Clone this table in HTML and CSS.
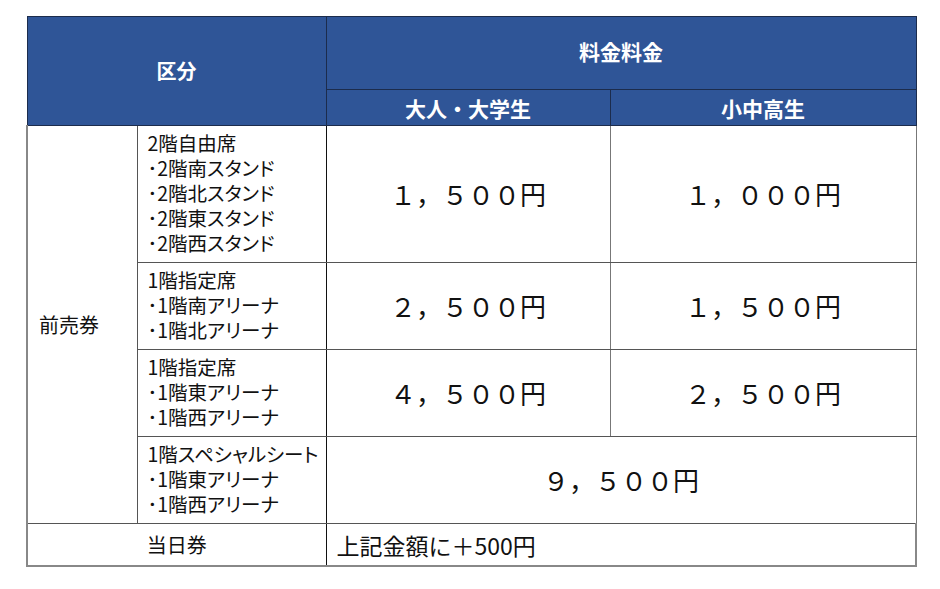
FILE: index.html
```html
<!DOCTYPE html>
<html lang="ja">
<head>
<meta charset="utf-8">
<link rel="stylesheet" href="styles.css">
</head>
<body>
<div class="page">
<table class="fees">
  <colgroup>
    <col class="c1"><col class="c2"><col class="c3"><col class="c4">
  </colgroup>
  <thead>
    <tr class="h1">
      <th colspan="2" rowspan="2">区分</th>
      <th colspan="2">料金料金</th>
    </tr>
    <tr class="h2">
      <th>大人・大学生</th>
      <th>小中高生</th>
    </tr>
  </thead>
  <tbody>
    <tr class="r1">
      <td rowspan="4" class="cat">前売券</td>
      <td class="seat">2階自由席<br>･2階南スタンド<br>･2階北スタンド<br>･2階東スタンド<br>･2階西スタンド</td>
      <td class="price">１，５００円</td>
      <td class="price">１，０００円</td>
    </tr>
    <tr class="r2">
      <td class="seat">1階指定席<br>･1階南アリーナ<br>･1階北アリーナ</td>
      <td class="price">２，５００円</td>
      <td class="price">１，５００円</td>
    </tr>
    <tr class="r3">
      <td class="seat">1階指定席<br>･1階東アリーナ<br>･1階西アリーナ</td>
      <td class="price">４，５００円</td>
      <td class="price">２，５００円</td>
    </tr>
    <tr class="r4">
      <td class="seat">1階スペシャルシート<br>･1階東アリーナ<br>･1階西アリーナ</td>
      <td class="price" colspan="2">９，５００円</td>
    </tr>
    <tr class="r5">
      <td colspan="2" class="day">当日券</td>
      <td colspan="2" class="note">上記金額に＋500円</td>
    </tr>
  </tbody>
</table>
</div>
</body>
</html>
```
FILE: styles.css
```css
html, body {
  margin: 0;
  padding: 0;
  background: #ffffff;
}
.page {
  padding: 16px 0 0 26px;
}
.fees {
  border-collapse: collapse;
  table-layout: fixed;
  width: 889px;
  font-family: "Noto Sans CJK JP", "Noto Sans", sans-serif;
  color: #111;
}
.c1 { width: 110px; }
.c2 { width: 189px; }
.c3 { width: 284px; }
.c4 { width: 306px; }

.fees th {
  background: #2f5597;
  color: #fff;
  font-weight: 700;
  font-size: 20px;
  border: 1px solid #1c2c4c;
  padding: 0;
  text-align: center;
}
.h1 th { height: 68px; line-height: 24px; }
.h1 th:last-child { padding-bottom: 4px; font-size: 21px; }
.h2 th { height: 35px; line-height: 24px; font-size: 21px; }

.fees td {
  border: 1px solid #555;
  padding: 0;
  vertical-align: middle;
}
.cat {
  font-size: 20px;
  padding-left: 11px !important;
  border-left: 2px solid #888 !important;
}
.seat {
  font-size: 19.5px;
  line-height: 25px;
  white-space: nowrap;
  font-feature-settings: "palt";
  padding: 4px 0 7px 10px !important;
  border-left: 1px solid #111 !important;
  border-right: 1px solid #111 !important;
}
.price {
  font-size: 26px;
  text-align: center;
  line-height: 30px;
  border-right: 1px solid #777 !important;
}
.r1 .price { height: 136px; }
.r2 .price, .r3 .price { height: 85px; }
.r4 .price { height: 86px; }
.day {
  font-size: 20px;
  text-align: center;
  height: 41px;
  line-height: 26px;
  border-left: 2px solid #888 !important;
  border-bottom: 2px solid #888 !important;
  border-right: 1px solid #111 !important;
}
.note {
  font-size: 23px;
  line-height: 26px;
  padding-left: 10px !important;
  border-bottom: 2px solid #888 !important;
  border-right: 2px solid #888 !important;
}
```
